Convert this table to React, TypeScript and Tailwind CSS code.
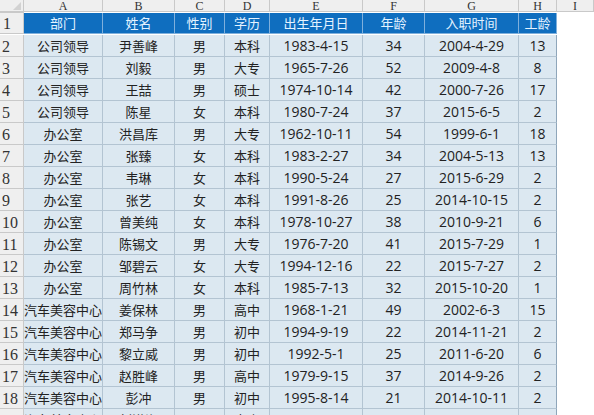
const cols = ["A", "B", "C", "D", "E", "F", "G", "H", "I"];

const header = ["部门", "姓名", "性别", "学历", "出生年月日", "年龄", "入职时间", "工龄"];

const rows: string[][] = [
  ["公司领导", "尹善峰", "男", "本科", "1983-4-15", "34", "2004-4-29", "13"],
  ["公司领导", "刘毅", "男", "大专", "1965-7-26", "52", "2009-4-8", "8"],
  ["公司领导", "王喆", "男", "硕士", "1974-10-14", "42", "2000-7-26", "17"],
  ["公司领导", "陈星", "女", "本科", "1980-7-24", "37", "2015-6-5", "2"],
  ["办公室", "洪昌库", "男", "大专", "1962-10-11", "54", "1999-6-1", "18"],
  ["办公室", "张臻", "女", "本科", "1983-2-27", "34", "2004-5-13", "13"],
  ["办公室", "韦琳", "女", "本科", "1990-5-24", "27", "2015-6-29", "2"],
  ["办公室", "张艺", "女", "本科", "1991-8-26", "25", "2014-10-15", "2"],
  ["办公室", "曾美纯", "女", "本科", "1978-10-27", "38", "2010-9-21", "6"],
  ["办公室", "陈锡文", "男", "大专", "1976-7-20", "41", "2015-7-29", "1"],
  ["办公室", "邹碧云", "女", "大专", "1994-12-16", "22", "2015-7-27", "2"],
  ["办公室", "周竹林", "女", "本科", "1985-7-13", "32", "2015-10-20", "1"],
  ["汽车美容中心", "姜保林", "男", "高中", "1968-1-21", "49", "2002-6-3", "15"],
  ["汽车美容中心", "郑马争", "男", "初中", "1994-9-19", "22", "2014-11-21", "2"],
  ["汽车美容中心", "黎立威", "男", "初中", "1992-5-1", "25", "2011-6-20", "6"],
  ["汽车美容中心", "赵胜峰", "男", "高中", "1979-9-15", "37", "2014-9-26", "2"],
  ["汽车美容中心", "彭冲", "男", "初中", "1995-8-14", "21", "2014-10-11", "2"],
  ["汽车美容中心", "刘洪海", "男", "高中", "1990-3-8", "27", "2014-8-12", "3"],
];

const gridCols =
  "grid grid-cols-[24px_79px_72px_50px_45px_93px_62px_94px_38px_1fr]";

const cjk = "font-['Noto_Sans_CJK_SC',sans-serif] text-[13px]";
const num = "font-['Open_Sans','Noto_Sans_CJK_SC',sans-serif] text-[14px]";

function isNumeric(s: string) {
  return /^[0-9-]+$/.test(s);
}

export default function App() {
  return (
    <div className="h-[415px] w-[594px] overflow-hidden bg-white text-[#222]">
      {/* column letters */}
      <div className={`${gridCols} h-[13px]`}>
        <div className="relative border-r border-b border-[#c9c9c9] bg-[#efefef]">
          <div className="absolute right-[2px] bottom-[1px] h-0 w-0 border-l-[8px] border-t-[8px] border-l-transparent border-t-[#d2d2d2] rotate-90" />
        </div>
        {cols.map((c) => (
          <div
            key={c}
            className="flex items-center justify-center overflow-hidden border-r border-b border-[#c9c9c9] bg-[#efefef] font-['Liberation_Serif',serif] text-[12px] leading-[12px] text-[#333]"
          >
            {c}
          </div>
        ))}
        <div className="border-b border-[#c9c9c9] bg-[#efefef]" />
      </div>

      {/* row 1: header */}
      <div className={`${gridCols} h-[22px]`}>
        <div className="flex items-end border-r border-b border-[#c9c9c9] bg-[#efefef] pb-[1px] pl-[3px] font-['Liberation_Serif',serif] text-[16px] leading-none text-[#333]">
          1
        </div>
        {header.map((h) => (
          <div
            key={h}
            className={`flex items-center justify-center border-r border-b border-[#7fb0dc] bg-[#0f6ebf] text-[#e4f3ff] ${cjk}`}
          >
            {h}
          </div>
        ))}
        <div />
        <div />
      </div>

      {rows.map((r, i) => (
        <div key={i} className={`${gridCols} h-[22px]`}>
          <div className="flex items-end border-r border-b border-[#c9c9c9] bg-[#efefef] pb-[1px] pl-[2px] font-['Liberation_Serif',serif] text-[16px] leading-none text-[#333]">
            {i + 2}
          </div>
          {r.map((v, j) => (
            <div
              key={j}
              className={`flex items-center justify-center overflow-hidden whitespace-nowrap border-b border-[#b3c4d2] bg-[#dce8f1] ${
                j === 7 ? "border-r border-r-[#8fa6ba]" : "border-r"
              } ${isNumeric(v) ? num : cjk}`}
            >
              {v}
            </div>
          ))}
          <div />
          <div />
        </div>
      ))}
    </div>
  );
}
